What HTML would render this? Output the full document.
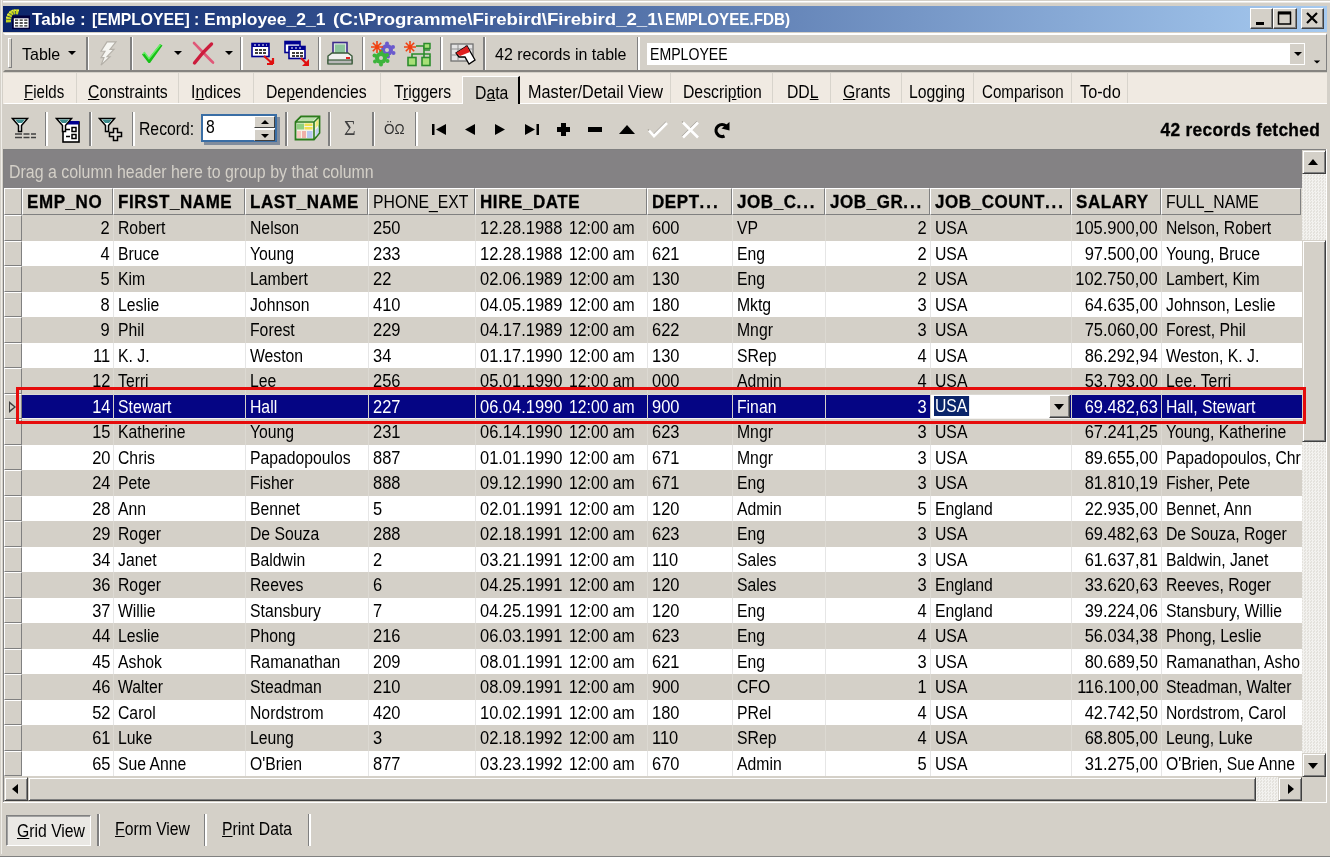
<!DOCTYPE html>
<html><head><meta charset="utf-8"><title>Table : [EMPLOYEE]</title>
<style>
*{box-sizing:border-box;margin:0;padding:0}
html,body{width:1330px;height:857px;overflow:hidden;background:#d4d0c8}
body{font-family:"Liberation Sans",sans-serif;font-size:17.5px;color:#000}
#win{position:absolute;left:0;top:0;width:1330px;height:857px;background:#d4d0c8;overflow:hidden;will-change:transform}
.abs{position:absolute}
.t{display:inline-block;white-space:nowrap;transform:scaleX(.9);transform-origin:0 50%}
/* window frame */
#frT{position:absolute;left:0;top:0;width:1330px;height:6px;background:#d4d0c8;border-top:1px solid #d4d0c8;box-shadow:inset 0 1.500px 0 #fff}
#frL{position:absolute;left:0;top:0;width:3px;height:857px;background:#d4d0c8;border-left:1px solid #d4d0c8;box-shadow:inset 1px 0 0 #f0eee9}
#frR{position:absolute;left:1327px;top:3px;width:3px;height:857px;background:#d4d0c8}
#frB{position:absolute;left:0;top:854px;width:1330px;height:3px;background:#d4d0c8;border-bottom:1px solid #808080}
/* title */
#title{position:absolute;left:3px;top:6px;width:1325px;height:26px;background:linear-gradient(to right,#0a246a 0%,#a6caf0 100%)}
#title .cap{position:absolute;left:30px;top:3px;font-weight:bold;color:#fff;font-size:17px;line-height:21px;white-space:nowrap}
#title .cap .t{transform:scaleX(1.02)}
.tb{position:absolute;top:2px;width:23px;height:21px;background:#d4d0c8;border:1px solid;border-color:#fff #404040 #404040 #fff;box-shadow:inset -1px -1px 0 #808080}
/* toolbar 1 */
#tb1{position:absolute;left:3px;border-left:2px solid #d4d0c8;top:33px;width:1324px;height:39px;background:#d4d0c8;border-top:2px solid #fff;border-bottom:2px solid #868480;border-right:1px solid #808080}
.sep{position:absolute;width:3px;background:linear-gradient(to right,#808080 0,#808080 50%,#fff 50%,#fff 100%)}
.lbl{position:absolute;white-space:nowrap;font-size:17.5px;line-height:20px}
/* tabs */
#tabs{position:absolute;left:3px;border-left:2px solid #f0eae2;top:73px;width:1324px;height:31px;background:#f0eae2;border-bottom:1px solid #fff}
.tab{position:absolute;top:0;height:30px;font-size:17.5px;line-height:20px;padding-top:9px;white-space:nowrap;border-right:1px solid #d8d4cc}
.tab u{text-decoration:underline}
/* toolbar 2 */
#tb2{position:absolute;left:3px;border-left:2px solid #d4d0c8;top:104px;width:1324px;height:45px;background:#d4d0c8}
/* group panel */
#gp{position:absolute;left:3px;top:150px;width:1299px;height:38px;background:#848284;color:#d4d0c8;font-size:17.5px;line-height:20px}
#gp .t{transform:scaleX(.91)}
#gp span{position:absolute;left:6px;top:12px}
/* grid */
#grid{position:absolute;left:0;top:0;width:1302px;height:777px;overflow:hidden}
.hrow{position:absolute;left:3px;top:188px;width:1299px;height:27px;background:#d4d0c8;border-left:1px solid #808080}
.hind{position:absolute;left:0;top:0;width:18px;height:27px;border:1px solid;border-color:#fff #808080 #808080 #fff}
.hc{position:absolute;top:0;height:27px;border:1px solid;border-color:#fff #808080 #808080 #fff;font-size:17.5px;line-height:20px;padding:3px 0 0 4px;overflow:hidden;white-space:nowrap}

.hc.b{font-weight:bold;font-size:17.5px;letter-spacing:.6px;-webkit-text-stroke:.3px #000}
.hc.b .t{transform:scaleX(.97)}
.row{position:absolute;left:3px;width:1299px;background:#fff;border-left:1px solid #808080}
.row.g{background:#d4d0c8}
.row.sel{background:#050584;color:#fff;box-shadow:inset 0 1px 0 #dcdad4,inset 0 -1px 0 #f4f2f0}
.ind{position:absolute;left:0;top:0;width:18px;height:100%;background:#d4d0c8;border:1px solid;border-color:#fff #808080 #808080 #fff}
.c{position:absolute;top:0;height:100%;line-height:20px;padding:3px 3px 0 5px;overflow:hidden;white-space:nowrap;border-right:1px solid #e6e6e6}
.row.g .c{border-right-color:#dcd9d2}
.row.sel .c{border-right-color:#d4d0c8}
.c.r{display:flex;justify-content:flex-end;padding-right:3px}
.c.r .t{transform-origin:100% 50%}
.tm{position:absolute;left:94px;top:3px}
.grip{position:absolute;left:3px;top:4px;width:4px;height:30px;border:1px solid;border-color:#fff #808080 #808080 #fff}
#tb1 .sep{top:3px;height:33px}
.arr{position:absolute;width:0;height:0;border-left:4px solid transparent;border-right:4px solid transparent;border-top:4px solid #000}
.combo{position:absolute;left:642px;top:9px;width:658px;height:22px;background:#fff}
.cbtn{position:absolute;right:1px;top:1px;width:14px;height:20px;background:#d4d0c8}
.tab.act{background:#d4d0c8;top:3px;height:28px;padding-top:6px;border-left:1px solid #fff;border-top:1px solid #fff;border-right:2px solid #000}
#tb2 .sep{top:8px;height:34px}
.spin{position:absolute;left:196px;top:10px;width:76px;height:28px;background:#fff;border:2px solid #7f9db9;border-color:#3a6ea5 #3a6ea5 #3a6ea5 #3a6ea5;box-shadow:3px 3px 0 #808c9c}
.spin .lbl{line-height:22px}
.sb{position:absolute;left:51px;width:21px;height:12px;background:#d4d0c8;border:1px solid;border-color:#fff #404040 #404040 #fff}
.arr.up{border-top:0;border-bottom:4px solid #000}

#tb1 .t{transform:scaleX(.94)}
.dith{background-color:#d4d0c8;background-image:linear-gradient(45deg,#fff 25%,transparent 25%,transparent 75%,#fff 75%),linear-gradient(45deg,#fff 25%,transparent 25%,transparent 75%,#fff 75%);background-size:2px 2px;background-position:0 0,1px 1px}
#vs{position:absolute;left:1302px;top:150px;width:24px;height:627px}
#hs{position:absolute;left:4px;top:777px;width:1298px;height:24px}
.sbtn{position:absolute;background:#d4d0c8;border:1px solid;border-color:#d4d0c8 #404040 #404040 #d4d0c8;box-shadow:inset 1px 1px 0 #fff,inset -1px -1px 0 #808080}
.arr.lf{border:4px solid transparent;border-left:0;border-right:4px solid #000}
.arr.rt{border:4px solid transparent;border-right:0;border-left:4px solid #000}
#redbox{position:absolute;left:16px;top:387px;width:1290px;height:37px;border:3px solid #e60c0c}
#bot{position:absolute;left:3px;border-left:2px solid #d4d0c8;top:803px;width:1324px;height:51px;background:#d4d0c8}
#bot .sep{top:11px;height:32px}
.gv{position:absolute;left:1px;top:12px;width:85px;height:31px;background:#eae8e4;border:1px solid;border-color:#808080 #fff #fff #808080;box-shadow:inset 1px 1px 0 #a0a0a0}

.sarr{position:absolute;width:0;height:0;border-left:5.5px solid transparent;border-right:5.5px solid transparent;border-top:6px solid #000}
.sarr.up{border-top:0;border-bottom:6px solid #000}
.sarr.lf{border:5.5px solid transparent;border-left:0;border-right:6px solid #000}
.sarr.rt{border:5.5px solid transparent;border-right:0;border-left:6px solid #000}
.ed{position:absolute;left:1px;top:1px;right:1px;bottom:1px;background:#fff;color:#fff}
.hl{position:absolute;left:3px;top:1px;height:20px;padding:0 2px 0 1px;background:#0a246a;line-height:20px}
.hl.t{transform-origin:0 50%}
.dd{position:absolute;right:0;top:0;width:21px;height:100%;background:#d4d0c8;border:1px solid;border-color:#fff #404040 #404040 #fff;box-shadow:inset -1px -1px 0 #808080}
.cur{position:absolute;left:4px;top:6px;width:0;height:0;border-top:6px solid transparent;border-bottom:6px solid transparent;border-left:7px solid #404040}
.cur:after{content:"";position:absolute;left:-6px;top:-3px;border-top:3px solid transparent;border-bottom:3px solid transparent;border-left:4px solid #d4d0c8}

#gwr{position:absolute;left:1326px;top:149px;width:1px;height:654px;background:#fff}
#gwb{position:absolute;left:3px;top:802px;width:1324px;height:1px;background:#fff}
#gcorner{position:absolute;left:1302px;top:777px;width:24px;height:25px;background:#d4d0c8}

#tb1>*{margin-top:-1px}

#vs,#hs{background-color:#ebe9e5;background-image:conic-gradient(#f3f2ef 25%,#e4e2dd 0 50%,#f3f2ef 0 75%,#e4e2dd 0);background-size:3px 3px}

.row .c.last{border-right:0}
.el{letter-spacing:2px}
.t.n{transform:scaleX(.94)}
#gwl{position:absolute;left:3px;top:149px;width:1px;height:653px;background:#808080}
#gwt{position:absolute;left:3px;top:149px;width:1323px;height:1px;background:#808080}

</style></head>
<body>
<div id="win">
<div id="title">
<svg class="abs" style="left:1px;top:2px" width="28" height="24" viewBox="0 0 28 24"><path d="M14.500 4 C8 2.500 4 6 4.500 15" stroke="#c4d41c" stroke-width="5" fill="none" stroke-dasharray="2.400 .6"/><path d="M15 2.500 C9 1 3 4 2.500 12" stroke="#e8ec50" stroke-width="1.500" fill="none" stroke-dasharray="1.500 1.500"/><rect x="8" y="7.500" width="18" height="13.700" fill="#00003c"/><rect x="9.800" y="10.300" width="14.800" height="9.400" fill="#fff"/><path d="M11 12.200h3.200M15.600 12.200h3.200M20.200 12.200h3.200M11 15h3.200M15.600 15h3.200M20.200 15h3.200M11 17.800h3.200M15.600 17.800h3.200M20.200 17.800h3.200" stroke="#202020" stroke-width="1.300"/></svg>
<span class="cap" style="left:29.1px"><span class="t" style="transform:scaleX(1.000)">Table :</span></span><span class="cap" style="left:89.0px"><span class="t" style="transform:scaleX(0.924)">[EMPLOYEE] :</span></span><span class="cap" style="left:201.0px"><span class="t" style="transform:scaleX(1.028)">Employee_2_1</span></span><span class="cap" style="left:330.4px"><span class="t" style="transform:scaleX(1.094)">(C:\Programme\Firebird\Firebird_2_1\</span></span><span class="cap" style="left:661.8px"><span class="t" style="transform:scaleX(0.894)">EMPLOYEE.FDB)</span></span>
<div class="tb" style="left:1247px"><svg width="21" height="19" viewBox="0 0 21 19"><rect x="5" y="13" width="8" height="3" fill="#000"/></svg></div>
<div class="tb" style="left:1270px;width:24px"><svg width="22" height="19" viewBox="0 0 22 19"><rect x="4.5" y="3.5" width="12" height="11.5" fill="none" stroke="#000" stroke-width="1.5"/><rect x="4" y="2.5" width="13" height="3" fill="#000"/></svg></div>
<div class="tb" style="left:1298px"><svg width="21" height="19" viewBox="0 0 21 19"><path d="M5 4l10 10M15 4l-10 10" stroke="#000" stroke-width="2.2"/></svg></div>
</div>
<div id="tb1">
<div class="grip"></div>
<span class="lbl" style="left:17px;top:11px;font-size:17px"><span class="t">Table</span></span>
<i class="arr" style="left:63px;top:17px"></i>
<div class="sep" style="left:81px"></div>
<svg class="abs" style="left:93px;top:7px" width="20" height="25" viewBox="0 0 20 27" preserveAspectRatio="none"><path d="M9 1 L18 1 L12 9 L16 9 L9 17 L12 17 L3 26 L6 18 L3 18 L7 11 L3 11 Z" fill="#f6f6f2" stroke="#b4b0a8" stroke-width="1.200"/></svg>
<div class="sep" style="left:125px"></div>
<svg class="abs" style="left:134px;top:7px" width="26" height="24" viewBox="0 0 26 24"><path d="M3 13.500 L5.500 11 L10 17 L21 3 L23.500 4.500 L11 22 L9.500 22 Z" fill="#18c018"/><path d="M4 13 L5.500 11.500 L10 17.500 L21.500 3.500" stroke="#68f068" stroke-width="1.400" fill="none"/></svg>
<i class="arr" style="left:169px;top:17px"></i>
<svg class="abs" style="left:186px;top:7px" width="26" height="26" viewBox="0 0 26 26"><path d="M3 2 C9 8 16 16 22 21.500" stroke="#e05878" stroke-width="2.600" stroke-linecap="round" fill="none"/><path d="M20.500 3 C14 9 8 16 3.500 22" stroke="#cc1c3c" stroke-width="3.400" stroke-linecap="round" fill="none"/></svg>
<i class="arr" style="left:220px;top:17px"></i>
<div class="sep" style="left:235px"></div>
<svg class="abs" style="left:246px;top:8px" width="24" height="24" viewBox="0 0 24 24"><rect x="1" y="1.5" width="17" height="13" fill="#fff" stroke="#000090" stroke-width="1.6"/><rect x="1" y="1.5" width="17" height="3.5" fill="#000090"/><path d="M3 3h2M7 3h2M11 3h2M15 3h1" stroke="#fff" stroke-width="1.2"/><path d="M4 8h11M4 11h11" stroke="#000" stroke-width="1.6" stroke-dasharray="3 1"/><path d="M13 14 L22 22 M22 22 L22 16 M22 22 L16 22" stroke="#e01010" stroke-width="2.2" fill="none"/><path d="M22 23 L22 17 L16 23Z" fill="#e01010"/></svg>
<svg class="abs" style="left:279px;top:6px" width="26" height="27" viewBox="0 0 26 27"><rect x="1" y="1.5" width="15" height="11" fill="#fff" stroke="#000090" stroke-width="1.6"/><rect x="1" y="1.5" width="15" height="3" fill="#000090"/><rect x="5" y="6.5" width="16" height="12" fill="#fff" stroke="#000090" stroke-width="1.6"/><rect x="5" y="6.5" width="16" height="3.5" fill="#000090"/><path d="M7 8h2M11 8h2M15 8h2" stroke="#fff" stroke-width="1.2"/><path d="M8 13h11M8 16h11" stroke="#000" stroke-width="1.6" stroke-dasharray="3 1"/><path d="M25 26 L25 19 L18 26Z" fill="#e01010"/><path d="M17 18 L23 24" stroke="#e01010" stroke-width="2.2"/></svg>
<div class="sep" style="left:313px"></div>
<svg class="abs" style="left:322px;top:7px" width="26" height="26" viewBox="0 0 26 26"><rect x="6" y="1.5" width="14" height="12" fill="#dfe8df" stroke="#3c2c8c" stroke-width="1.6"/><rect x="8" y="3.5" width="10" height="9" fill="#8cc49c"/><path d="M1 15 L5 12 L21 12 L25 15 L25 22 L1 22 Z" fill="#f0f0f0" stroke="#3a5a3a" stroke-width="1.4"/><rect x="1" y="19" width="24" height="4" fill="#b8b8b8" stroke="#3a5a3a" stroke-width="1.2"/><rect x="19" y="16" width="4" height="2" fill="#e02020"/></svg>
<div class="sep" style="left:357px"></div>
<svg class="abs" style="left:366px;top:7px" width="26" height="26" viewBox="0 0 26 26"><g fill="#6a5acd"><circle cx="16" cy="9" r="6"/><circle cx="16" cy="2.5" r="2"/><circle cx="22" cy="6" r="2"/><circle cx="22.5" cy="12" r="2"/><circle cx="17" cy="15.5" r="2"/></g><circle cx="16" cy="9" r="2" fill="#d4d0c8"/><g fill="#3cb43c"><circle cx="10" cy="17" r="6"/><circle cx="10" cy="10.5" r="2"/><circle cx="16" cy="14" r="2"/><circle cx="16.5" cy="20" r="2"/><circle cx="10" cy="23.5" r="2"/><circle cx="4" cy="20.5" r="2"/><circle cx="3.5" cy="14.5" r="2"/></g><circle cx="10" cy="17" r="2" fill="#d4d0c8"/><path d="M6 0v12M0 6h12M1.8 1.8l8.4 8.4M10.2 1.8l-8.4 8.4" stroke="#f04010" stroke-width="1.6"/></svg>
<svg class="abs" style="left:399px;top:7px" width="28" height="26" viewBox="0 0 28 26"><path d="M12 5h8v7M20 9h6M20 12v4M8 16v-3h18v3" stroke="#2c8c2c" stroke-width="1.6" fill="none"/><rect x="20" y="2.5" width="6" height="5" fill="#a8e078" stroke="#2c8c2c" stroke-width="1.5"/><rect x="4" y="16.5" width="8" height="8" fill="#a8e078" stroke="#2c8c2c" stroke-width="1.6"/><rect x="18" y="16.5" width="8" height="8" fill="#a8e078" stroke="#2c8c2c" stroke-width="1.6"/><path d="M6 0v12M0 6h12M1.8 1.8l8.4 8.4M10.2 1.8l-8.4 8.4" stroke="#f04010" stroke-width="1.6"/></svg>
<div class="sep" style="left:435px"></div>
<svg class="abs" style="left:445px;top:9px" width="26" height="24" viewBox="0 0 26 24"><rect x="1" y="1" width="22" height="17" fill="#e4e4e4" stroke="#707070" stroke-width="1.3"/><path d="M1 6h22M1 12h22M8 1v17M16 1v17" stroke="#909090" stroke-width="1"/><path d="M6 10 L17 3 L25 17 L19 21 L15 14 L9 14 Z" fill="#fff" stroke="#000" stroke-width="1.3"/><path d="M6 10 L17 3 L20 9 L10 13 Z" fill="#e02020"/></svg>
<div class="sep" style="left:478px"></div>
<span class="lbl" style="left:490px;top:11px;font-size:17px"><span class="t">42 records in table</span></span>
<div class="sep" style="left:632px"></div>
<div class="combo"><span class="lbl" style="left:3px;top:1px;font-size:17px;line-height:21px"><span class="t" style="transform:scaleX(.83)">EMPLOYEE</span></span><div class="cbtn"><i class="arr" style="left:4px;top:8px"></i></div></div>
<i class="arr" style="left:1308px;top:26px;transform:scale(.8)"></i>
</div>
<div id="tabs">
<div class="tab" style="left:0;width:72px;padding-left:19px"><span class="t" style="transform:scaleX(.86)"><u>F</u>ields</span></div>
<div class="tab" style="left:72px;width:102px;padding-left:11px"><span class="t"><u>C</u>onstraints</span></div>
<div class="tab" style="left:174px;width:75px;padding-left:12px"><span class="t">I<u>n</u>dices</span></div>
<div class="tab" style="left:249px;width:127px;padding-left:12px"><span class="t">De<u>p</u>endencies</span></div>
<div class="tab" style="left:376px;width:81px;padding-left:13px;border-right:0"><span class="t">T<u>r</u>iggers</span></div>
<div class="tab act" style="left:457px;width:58px;padding-left:12px"><span class="t">D<u>a</u>ta</span></div>
<div class="tab" style="left:516px;width:150px;padding-left:7px"><span class="t" style="transform:scaleX(.927)">Master/Detail View</span></div>
<div class="tab" style="left:666px;width:102px;padding-left:12px"><span class="t">Descri<u>p</u>tion</span></div>
<div class="tab" style="left:768px;width:58px;padding-left:14px"><span class="t">DD<u>L</u></span></div>
<div class="tab" style="left:826px;width:71px;padding-left:12px"><span class="t"><u>G</u>rants</span></div>
<div class="tab" style="left:897px;width:72px;padding-left:7px"><span class="t">Lo<u>g</u>ging</span></div>
<div class="tab" style="left:969px;width:98px;padding-left:8px"><span class="t" style="transform:scaleX(.865)">Comparison</span></div>
<div class="tab" style="left:1067px;width:56px;padding-left:8px"><span class="t" style="transform:scaleX(.93)">To-do</span></div>
</div>
<div id="tb2">
<svg class="abs" style="left:6px;top:12px" width="26" height="26" viewBox="0 0 26 26"><path d="M1.500 2.500h15l-6 7v6h-3v-6z" fill="#fff" stroke="#000" stroke-width="1.500"/><path d="M4 3.500h10l-3 3.500h-4z" fill="#3c8c8c"/><path d="M4 18h7M12.500 18h6M20 18h5M4 21.500h7M12.500 21.500h6M20 21.500h5" stroke="#404040" stroke-width="1.500"/></svg>
<svg class="abs" style="left:50px;top:12px" width="28" height="28" viewBox="0 0 28 28"><rect x="8" y="6" width="16" height="20" fill="#fff" stroke="#000" stroke-width="1.600"/><rect x="8" y="5" width="16" height="3.500" fill="#000090"/><rect x="17" y="11.500" width="4" height="4" fill="none" stroke="#000" stroke-width="1.500"/><rect x="17" y="18.500" width="4" height="4" fill="none" stroke="#000" stroke-width="1.500"/><path d="M11 13.500h4M11 20.500h4" stroke="#000" stroke-width="1.500"/><path d="M1.500 2.500h15l-6 7v6h-3v-6z" fill="#fff" stroke="#000" stroke-width="1.500"/><path d="M4 3.500h10l-3 3.500h-4z" fill="#3c8c8c"/></svg>
<svg class="abs" style="left:93px;top:12px" width="28" height="28" viewBox="0 0 28 28"><path d="M1.500 2.500h15l-6 7v6h-3v-6z" fill="#fff" stroke="#000" stroke-width="1.500"/><path d="M4 3.500h10l-3 3.500h-4z" fill="#3c8c8c"/><path d="M15.500 12.500h4v4h4v4h-4v4h-4v-4h-4v-4h4z" fill="#e4e2dc" stroke="#000" stroke-width="1.500"/></svg>
<div class="sep" style="left:40px"></div><div class="sep" style="left:84px"></div><div class="sep" style="left:127px"></div>
<span class="lbl" style="left:134px;top:15px"><span class="t">Record:</span></span>
<div class="spin"><span class="lbl" style="left:3px;top:0px"><span class="t">8</span></span>
<div class="sb" style="top:0"><i class="arr up" style="left:6px;top:3px"></i></div><div class="sb" style="top:13px"><i class="arr" style="left:6px;top:4px"></i></div></div>
<div class="sep" style="left:280px"></div>
<svg class="abs" style="left:289px;top:11px" width="27" height="26" viewBox="0 0 27 26"><path d="M1.500 7 L7 1.500 L25.500 1.500 L25.500 18 L20 24.500 L1.500 24.500 Z" fill="#f4f4e8" stroke="#2c7c1c" stroke-width="1.800"/><path d="M1.500 7 H20 V24.500 M20 7 L25.500 1.500" fill="none" stroke="#2c7c1c" stroke-width="1.600"/><rect x="3" y="8.500" width="7" height="6" fill="#90d080"/><rect x="10.500" y="8.500" width="8" height="2.500" fill="#f0e050"/><rect x="10.500" y="12" width="8" height="2.500" fill="#f0e050"/><rect x="3" y="16" width="4" height="7" fill="#f8c8c0"/><rect x="8" y="16" width="4" height="7" fill="#f0b0a8"/><rect x="13" y="16" width="5.500" height="7" fill="#b8c8f0"/><path d="M21.500 7 L24.500 4 V10 L21.500 13Z" fill="#f0e878"/><path d="M21.500 15 L24.500 12 V18 L21.500 22Z" fill="#c0d0f0"/><path d="M4 6 L8 3 H22 L19 6Z" fill="#b8e0a8"/></svg>
<div class="sep" style="left:323px"></div>
<span class="lbl" style="left:339px;top:14px;font-family:'Liberation Serif',serif;font-size:20px;color:#404040">&#931;</span>
<div class="sep" style="left:367px"></div>
<span class="lbl" style="left:379px;top:15px;font-size:15px;color:#303030"><span class="t">&#214;&#937;</span></span>
<div class="sep" style="left:410px"></div>
<svg class="abs" style="left:420px;top:14px" width="310" height="22" viewBox="0 0 310 22">
<g fill="#000">
<rect x="7" y="6" width="2.5" height="11"/><path d="M21 6v11l-10-5.5z"/>
<path d="M50 6v11l-10-5.5z"/>
<path d="M70 6v11l10-5.5z"/>
<path d="M100 6v11l10-5.5z"/><rect x="111.500" y="6" width="2.500" height="11"/>
<path d="M136 5h5v4h4v5h-4v4h-5v-4h-4v-5h4z"/>
<rect x="163" y="9" width="14" height="5"/>
<path d="M194 16h16l-8-9z"/>
<path d="M299.500 18 A6 6 0 1 1 301 8" stroke="#000" stroke-width="3.200" fill="none"/><path d="M304.500 4 V12.500 L296.500 10.500 Z"/>
</g>
<path d="M224 12.500 l5 5.500 13-13" stroke="#a8a49c" stroke-width="1.200" fill="none" transform="translate(-1,-1.200)"/><path d="M224 12.500 l5 5.500 13-13" stroke="#fff" stroke-width="2.600" fill="none"/>
<path d="M258 4.500l15 15M273 4.500l-15 15" stroke="#a8a49c" stroke-width="1.200" fill="none" transform="translate(-1,-1.200)"/><path d="M258 4.500l15 15M273 4.500l-15 15" stroke="#fff" stroke-width="2.600" fill="none"/>
</svg>
<span class="lbl" style="right:7px;top:16px;font-weight:bold;font-size:17.5px;letter-spacing:.3px;-webkit-text-stroke:.3px #000"><span class="t" style="transform-origin:100% 50%;transform:scaleX(.99)">42 records fetched</span></span>
</div>
<div id="gp"><span class="t">Drag a column header here to group by that column</span></div>
<div id="grid">
<div class="hrow"><div class="hind"></div><div class="hc b" style="left:18px;width:91px"><span class="t">EMP_NO</span></div><div class="hc b" style="left:109px;width:132px"><span class="t">FIRST_NAME</span></div><div class="hc b" style="left:241px;width:123px"><span class="t">LAST_NAME</span></div><div class="hc" style="left:364px;width:107px"><span class="t">PHONE_EXT</span></div><div class="hc b" style="left:471px;width:172px"><span class="t">HIRE_DATE</span></div><div class="hc b" style="left:643px;width:85px"><span class="t">DEPT<span class="el">...</span></span></div><div class="hc b" style="left:728px;width:93px"><span class="t">JOB_C<span class="el">...</span></span></div><div class="hc b" style="left:821px;width:105px"><span class="t">JOB_GR<span class="el">...</span></span></div><div class="hc b" style="left:926px;width:141px"><span class="t">JOB_COUNT<span class="el">...</span></span></div><div class="hc b" style="left:1067px;width:90px"><span class="t">SALARY</span></div><div class="hc" style="left:1157px;width:140px"><span class="t">FULL_NAME</span></div></div>
<div class="row g" style="top:215px;height:26px"><div class="ind"></div><div class="c r" style="left:18px;width:92px"><span class="t n">2</span></div><div class="c l" style="left:109px;width:133px"><span class="t">Robert</span></div><div class="c l" style="left:241px;width:124px"><span class="t">Nelson</span></div><div class="c l" style="left:364px;width:108px"><span class="t n">250</span></div><div class="c l" style="left:471px;width:173px"><span class="t n">12.28.1988</span><span class="t tm">12:00 am</span></div><div class="c l" style="left:643px;width:86px"><span class="t n">600</span></div><div class="c l" style="left:728px;width:94px"><span class="t">VP</span></div><div class="c r" style="left:821px;width:106px"><span class="t n">2</span></div><div class="c l" style="left:926px;width:142px"><span class="t">USA</span></div><div class="c r" style="left:1067px;width:91px"><span class="t n">105.900,00</span></div><div class="c l last" style="left:1157px;width:141px"><span class="t">Nelson, Robert</span></div></div>
<div class="row" style="top:241px;height:25px"><div class="ind"></div><div class="c r" style="left:18px;width:92px"><span class="t n">4</span></div><div class="c l" style="left:109px;width:133px"><span class="t">Bruce</span></div><div class="c l" style="left:241px;width:124px"><span class="t">Young</span></div><div class="c l" style="left:364px;width:108px"><span class="t n">233</span></div><div class="c l" style="left:471px;width:173px"><span class="t n">12.28.1988</span><span class="t tm">12:00 am</span></div><div class="c l" style="left:643px;width:86px"><span class="t n">621</span></div><div class="c l" style="left:728px;width:94px"><span class="t">Eng</span></div><div class="c r" style="left:821px;width:106px"><span class="t n">2</span></div><div class="c l" style="left:926px;width:142px"><span class="t">USA</span></div><div class="c r" style="left:1067px;width:91px"><span class="t n">97.500,00</span></div><div class="c l last" style="left:1157px;width:141px"><span class="t">Young, Bruce</span></div></div>
<div class="row g" style="top:266px;height:26px"><div class="ind"></div><div class="c r" style="left:18px;width:92px"><span class="t n">5</span></div><div class="c l" style="left:109px;width:133px"><span class="t">Kim</span></div><div class="c l" style="left:241px;width:124px"><span class="t">Lambert</span></div><div class="c l" style="left:364px;width:108px"><span class="t n">22</span></div><div class="c l" style="left:471px;width:173px"><span class="t n">02.06.1989</span><span class="t tm">12:00 am</span></div><div class="c l" style="left:643px;width:86px"><span class="t n">130</span></div><div class="c l" style="left:728px;width:94px"><span class="t">Eng</span></div><div class="c r" style="left:821px;width:106px"><span class="t n">2</span></div><div class="c l" style="left:926px;width:142px"><span class="t">USA</span></div><div class="c r" style="left:1067px;width:91px"><span class="t n">102.750,00</span></div><div class="c l last" style="left:1157px;width:141px"><span class="t">Lambert, Kim</span></div></div>
<div class="row" style="top:292px;height:25px"><div class="ind"></div><div class="c r" style="left:18px;width:92px"><span class="t n">8</span></div><div class="c l" style="left:109px;width:133px"><span class="t">Leslie</span></div><div class="c l" style="left:241px;width:124px"><span class="t">Johnson</span></div><div class="c l" style="left:364px;width:108px"><span class="t n">410</span></div><div class="c l" style="left:471px;width:173px"><span class="t n">04.05.1989</span><span class="t tm">12:00 am</span></div><div class="c l" style="left:643px;width:86px"><span class="t n">180</span></div><div class="c l" style="left:728px;width:94px"><span class="t">Mktg</span></div><div class="c r" style="left:821px;width:106px"><span class="t n">3</span></div><div class="c l" style="left:926px;width:142px"><span class="t">USA</span></div><div class="c r" style="left:1067px;width:91px"><span class="t n">64.635,00</span></div><div class="c l last" style="left:1157px;width:141px"><span class="t">Johnson, Leslie</span></div></div>
<div class="row g" style="top:317px;height:26px"><div class="ind"></div><div class="c r" style="left:18px;width:92px"><span class="t n">9</span></div><div class="c l" style="left:109px;width:133px"><span class="t">Phil</span></div><div class="c l" style="left:241px;width:124px"><span class="t">Forest</span></div><div class="c l" style="left:364px;width:108px"><span class="t n">229</span></div><div class="c l" style="left:471px;width:173px"><span class="t n">04.17.1989</span><span class="t tm">12:00 am</span></div><div class="c l" style="left:643px;width:86px"><span class="t n">622</span></div><div class="c l" style="left:728px;width:94px"><span class="t">Mngr</span></div><div class="c r" style="left:821px;width:106px"><span class="t n">3</span></div><div class="c l" style="left:926px;width:142px"><span class="t">USA</span></div><div class="c r" style="left:1067px;width:91px"><span class="t n">75.060,00</span></div><div class="c l last" style="left:1157px;width:141px"><span class="t">Forest, Phil</span></div></div>
<div class="row" style="top:343px;height:25px"><div class="ind"></div><div class="c r" style="left:18px;width:92px"><span class="t n">11</span></div><div class="c l" style="left:109px;width:133px"><span class="t">K. J.</span></div><div class="c l" style="left:241px;width:124px"><span class="t">Weston</span></div><div class="c l" style="left:364px;width:108px"><span class="t n">34</span></div><div class="c l" style="left:471px;width:173px"><span class="t n">01.17.1990</span><span class="t tm">12:00 am</span></div><div class="c l" style="left:643px;width:86px"><span class="t n">130</span></div><div class="c l" style="left:728px;width:94px"><span class="t">SRep</span></div><div class="c r" style="left:821px;width:106px"><span class="t n">4</span></div><div class="c l" style="left:926px;width:142px"><span class="t">USA</span></div><div class="c r" style="left:1067px;width:91px"><span class="t n">86.292,94</span></div><div class="c l last" style="left:1157px;width:141px"><span class="t">Weston, K. J.</span></div></div>
<div class="row g" style="top:368px;height:26px"><div class="ind"></div><div class="c r" style="left:18px;width:92px"><span class="t n">12</span></div><div class="c l" style="left:109px;width:133px"><span class="t">Terri</span></div><div class="c l" style="left:241px;width:124px"><span class="t">Lee</span></div><div class="c l" style="left:364px;width:108px"><span class="t n">256</span></div><div class="c l" style="left:471px;width:173px"><span class="t n">05.01.1990</span><span class="t tm">12:00 am</span></div><div class="c l" style="left:643px;width:86px"><span class="t n">000</span></div><div class="c l" style="left:728px;width:94px"><span class="t">Admin</span></div><div class="c r" style="left:821px;width:106px"><span class="t n">4</span></div><div class="c l" style="left:926px;width:142px"><span class="t">USA</span></div><div class="c r" style="left:1067px;width:91px"><span class="t n">53.793,00</span></div><div class="c l last" style="left:1157px;width:141px"><span class="t">Lee, Terri</span></div></div>
<div class="row sel" style="top:394px;height:25px"><div class="ind"><i class="cur"></i></div><div class="c r" style="left:18px;width:92px"><span class="t n">14</span></div><div class="c l" style="left:109px;width:133px"><span class="t">Stewart</span></div><div class="c l" style="left:241px;width:124px"><span class="t">Hall</span></div><div class="c l" style="left:364px;width:108px"><span class="t n">227</span></div><div class="c l" style="left:471px;width:173px"><span class="t n">06.04.1990</span><span class="t tm">12:00 am</span></div><div class="c l" style="left:643px;width:86px"><span class="t n">900</span></div><div class="c l" style="left:728px;width:94px"><span class="t">Finan</span></div><div class="c r" style="left:821px;width:106px"><span class="t n">3</span></div><div class="c l" style="left:926px;width:142px"><span class="ed"><span class="t hl">USA</span><i class="dd"><i class="sarr" style="left:4px;top:8px"></i></i></span></div><div class="c r" style="left:1067px;width:91px"><span class="t n">69.482,63</span></div><div class="c l last" style="left:1157px;width:141px"><span class="t">Hall, Stewart</span></div></div>
<div class="row g" style="top:419px;height:26px"><div class="ind"></div><div class="c r" style="left:18px;width:92px"><span class="t n">15</span></div><div class="c l" style="left:109px;width:133px"><span class="t">Katherine</span></div><div class="c l" style="left:241px;width:124px"><span class="t">Young</span></div><div class="c l" style="left:364px;width:108px"><span class="t n">231</span></div><div class="c l" style="left:471px;width:173px"><span class="t n">06.14.1990</span><span class="t tm">12:00 am</span></div><div class="c l" style="left:643px;width:86px"><span class="t n">623</span></div><div class="c l" style="left:728px;width:94px"><span class="t">Mngr</span></div><div class="c r" style="left:821px;width:106px"><span class="t n">3</span></div><div class="c l" style="left:926px;width:142px"><span class="t">USA</span></div><div class="c r" style="left:1067px;width:91px"><span class="t n">67.241,25</span></div><div class="c l last" style="left:1157px;width:141px"><span class="t">Young, Katherine</span></div></div>
<div class="row" style="top:445px;height:25px"><div class="ind"></div><div class="c r" style="left:18px;width:92px"><span class="t n">20</span></div><div class="c l" style="left:109px;width:133px"><span class="t">Chris</span></div><div class="c l" style="left:241px;width:124px"><span class="t">Papadopoulos</span></div><div class="c l" style="left:364px;width:108px"><span class="t n">887</span></div><div class="c l" style="left:471px;width:173px"><span class="t n">01.01.1990</span><span class="t tm">12:00 am</span></div><div class="c l" style="left:643px;width:86px"><span class="t n">671</span></div><div class="c l" style="left:728px;width:94px"><span class="t">Mngr</span></div><div class="c r" style="left:821px;width:106px"><span class="t n">3</span></div><div class="c l" style="left:926px;width:142px"><span class="t">USA</span></div><div class="c r" style="left:1067px;width:91px"><span class="t n">89.655,00</span></div><div class="c l last" style="left:1157px;width:141px"><span class="t">Papadopoulos, Chr</span></div></div>
<div class="row g" style="top:470px;height:26px"><div class="ind"></div><div class="c r" style="left:18px;width:92px"><span class="t n">24</span></div><div class="c l" style="left:109px;width:133px"><span class="t">Pete</span></div><div class="c l" style="left:241px;width:124px"><span class="t">Fisher</span></div><div class="c l" style="left:364px;width:108px"><span class="t n">888</span></div><div class="c l" style="left:471px;width:173px"><span class="t n">09.12.1990</span><span class="t tm">12:00 am</span></div><div class="c l" style="left:643px;width:86px"><span class="t n">671</span></div><div class="c l" style="left:728px;width:94px"><span class="t">Eng</span></div><div class="c r" style="left:821px;width:106px"><span class="t n">3</span></div><div class="c l" style="left:926px;width:142px"><span class="t">USA</span></div><div class="c r" style="left:1067px;width:91px"><span class="t n">81.810,19</span></div><div class="c l last" style="left:1157px;width:141px"><span class="t">Fisher, Pete</span></div></div>
<div class="row" style="top:496px;height:25px"><div class="ind"></div><div class="c r" style="left:18px;width:92px"><span class="t n">28</span></div><div class="c l" style="left:109px;width:133px"><span class="t">Ann</span></div><div class="c l" style="left:241px;width:124px"><span class="t">Bennet</span></div><div class="c l" style="left:364px;width:108px"><span class="t n">5</span></div><div class="c l" style="left:471px;width:173px"><span class="t n">02.01.1991</span><span class="t tm">12:00 am</span></div><div class="c l" style="left:643px;width:86px"><span class="t n">120</span></div><div class="c l" style="left:728px;width:94px"><span class="t">Admin</span></div><div class="c r" style="left:821px;width:106px"><span class="t n">5</span></div><div class="c l" style="left:926px;width:142px"><span class="t">England</span></div><div class="c r" style="left:1067px;width:91px"><span class="t n">22.935,00</span></div><div class="c l last" style="left:1157px;width:141px"><span class="t">Bennet, Ann</span></div></div>
<div class="row g" style="top:521px;height:26px"><div class="ind"></div><div class="c r" style="left:18px;width:92px"><span class="t n">29</span></div><div class="c l" style="left:109px;width:133px"><span class="t">Roger</span></div><div class="c l" style="left:241px;width:124px"><span class="t">De Souza</span></div><div class="c l" style="left:364px;width:108px"><span class="t n">288</span></div><div class="c l" style="left:471px;width:173px"><span class="t n">02.18.1991</span><span class="t tm">12:00 am</span></div><div class="c l" style="left:643px;width:86px"><span class="t n">623</span></div><div class="c l" style="left:728px;width:94px"><span class="t">Eng</span></div><div class="c r" style="left:821px;width:106px"><span class="t n">3</span></div><div class="c l" style="left:926px;width:142px"><span class="t">USA</span></div><div class="c r" style="left:1067px;width:91px"><span class="t n">69.482,63</span></div><div class="c l last" style="left:1157px;width:141px"><span class="t">De Souza, Roger</span></div></div>
<div class="row" style="top:547px;height:25px"><div class="ind"></div><div class="c r" style="left:18px;width:92px"><span class="t n">34</span></div><div class="c l" style="left:109px;width:133px"><span class="t">Janet</span></div><div class="c l" style="left:241px;width:124px"><span class="t">Baldwin</span></div><div class="c l" style="left:364px;width:108px"><span class="t n">2</span></div><div class="c l" style="left:471px;width:173px"><span class="t n">03.21.1991</span><span class="t tm">12:00 am</span></div><div class="c l" style="left:643px;width:86px"><span class="t n">110</span></div><div class="c l" style="left:728px;width:94px"><span class="t">Sales</span></div><div class="c r" style="left:821px;width:106px"><span class="t n">3</span></div><div class="c l" style="left:926px;width:142px"><span class="t">USA</span></div><div class="c r" style="left:1067px;width:91px"><span class="t n">61.637,81</span></div><div class="c l last" style="left:1157px;width:141px"><span class="t">Baldwin, Janet</span></div></div>
<div class="row g" style="top:572px;height:26px"><div class="ind"></div><div class="c r" style="left:18px;width:92px"><span class="t n">36</span></div><div class="c l" style="left:109px;width:133px"><span class="t">Roger</span></div><div class="c l" style="left:241px;width:124px"><span class="t">Reeves</span></div><div class="c l" style="left:364px;width:108px"><span class="t n">6</span></div><div class="c l" style="left:471px;width:173px"><span class="t n">04.25.1991</span><span class="t tm">12:00 am</span></div><div class="c l" style="left:643px;width:86px"><span class="t n">120</span></div><div class="c l" style="left:728px;width:94px"><span class="t">Sales</span></div><div class="c r" style="left:821px;width:106px"><span class="t n">3</span></div><div class="c l" style="left:926px;width:142px"><span class="t">England</span></div><div class="c r" style="left:1067px;width:91px"><span class="t n">33.620,63</span></div><div class="c l last" style="left:1157px;width:141px"><span class="t">Reeves, Roger</span></div></div>
<div class="row" style="top:598px;height:25px"><div class="ind"></div><div class="c r" style="left:18px;width:92px"><span class="t n">37</span></div><div class="c l" style="left:109px;width:133px"><span class="t">Willie</span></div><div class="c l" style="left:241px;width:124px"><span class="t">Stansbury</span></div><div class="c l" style="left:364px;width:108px"><span class="t n">7</span></div><div class="c l" style="left:471px;width:173px"><span class="t n">04.25.1991</span><span class="t tm">12:00 am</span></div><div class="c l" style="left:643px;width:86px"><span class="t n">120</span></div><div class="c l" style="left:728px;width:94px"><span class="t">Eng</span></div><div class="c r" style="left:821px;width:106px"><span class="t n">4</span></div><div class="c l" style="left:926px;width:142px"><span class="t">England</span></div><div class="c r" style="left:1067px;width:91px"><span class="t n">39.224,06</span></div><div class="c l last" style="left:1157px;width:141px"><span class="t">Stansbury, Willie</span></div></div>
<div class="row g" style="top:623px;height:26px"><div class="ind"></div><div class="c r" style="left:18px;width:92px"><span class="t n">44</span></div><div class="c l" style="left:109px;width:133px"><span class="t">Leslie</span></div><div class="c l" style="left:241px;width:124px"><span class="t">Phong</span></div><div class="c l" style="left:364px;width:108px"><span class="t n">216</span></div><div class="c l" style="left:471px;width:173px"><span class="t n">06.03.1991</span><span class="t tm">12:00 am</span></div><div class="c l" style="left:643px;width:86px"><span class="t n">623</span></div><div class="c l" style="left:728px;width:94px"><span class="t">Eng</span></div><div class="c r" style="left:821px;width:106px"><span class="t n">4</span></div><div class="c l" style="left:926px;width:142px"><span class="t">USA</span></div><div class="c r" style="left:1067px;width:91px"><span class="t n">56.034,38</span></div><div class="c l last" style="left:1157px;width:141px"><span class="t">Phong, Leslie</span></div></div>
<div class="row" style="top:649px;height:25px"><div class="ind"></div><div class="c r" style="left:18px;width:92px"><span class="t n">45</span></div><div class="c l" style="left:109px;width:133px"><span class="t">Ashok</span></div><div class="c l" style="left:241px;width:124px"><span class="t">Ramanathan</span></div><div class="c l" style="left:364px;width:108px"><span class="t n">209</span></div><div class="c l" style="left:471px;width:173px"><span class="t n">08.01.1991</span><span class="t tm">12:00 am</span></div><div class="c l" style="left:643px;width:86px"><span class="t n">621</span></div><div class="c l" style="left:728px;width:94px"><span class="t">Eng</span></div><div class="c r" style="left:821px;width:106px"><span class="t n">3</span></div><div class="c l" style="left:926px;width:142px"><span class="t">USA</span></div><div class="c r" style="left:1067px;width:91px"><span class="t n">80.689,50</span></div><div class="c l last" style="left:1157px;width:141px"><span class="t">Ramanathan, Asho</span></div></div>
<div class="row g" style="top:674px;height:26px"><div class="ind"></div><div class="c r" style="left:18px;width:92px"><span class="t n">46</span></div><div class="c l" style="left:109px;width:133px"><span class="t">Walter</span></div><div class="c l" style="left:241px;width:124px"><span class="t">Steadman</span></div><div class="c l" style="left:364px;width:108px"><span class="t n">210</span></div><div class="c l" style="left:471px;width:173px"><span class="t n">08.09.1991</span><span class="t tm">12:00 am</span></div><div class="c l" style="left:643px;width:86px"><span class="t n">900</span></div><div class="c l" style="left:728px;width:94px"><span class="t">CFO</span></div><div class="c r" style="left:821px;width:106px"><span class="t n">1</span></div><div class="c l" style="left:926px;width:142px"><span class="t">USA</span></div><div class="c r" style="left:1067px;width:91px"><span class="t n">116.100,00</span></div><div class="c l last" style="left:1157px;width:141px"><span class="t">Steadman, Walter</span></div></div>
<div class="row" style="top:700px;height:25px"><div class="ind"></div><div class="c r" style="left:18px;width:92px"><span class="t n">52</span></div><div class="c l" style="left:109px;width:133px"><span class="t">Carol</span></div><div class="c l" style="left:241px;width:124px"><span class="t">Nordstrom</span></div><div class="c l" style="left:364px;width:108px"><span class="t n">420</span></div><div class="c l" style="left:471px;width:173px"><span class="t n">10.02.1991</span><span class="t tm">12:00 am</span></div><div class="c l" style="left:643px;width:86px"><span class="t n">180</span></div><div class="c l" style="left:728px;width:94px"><span class="t">PRel</span></div><div class="c r" style="left:821px;width:106px"><span class="t n">4</span></div><div class="c l" style="left:926px;width:142px"><span class="t">USA</span></div><div class="c r" style="left:1067px;width:91px"><span class="t n">42.742,50</span></div><div class="c l last" style="left:1157px;width:141px"><span class="t">Nordstrom, Carol</span></div></div>
<div class="row g" style="top:725px;height:26px"><div class="ind"></div><div class="c r" style="left:18px;width:92px"><span class="t n">61</span></div><div class="c l" style="left:109px;width:133px"><span class="t">Luke</span></div><div class="c l" style="left:241px;width:124px"><span class="t">Leung</span></div><div class="c l" style="left:364px;width:108px"><span class="t n">3</span></div><div class="c l" style="left:471px;width:173px"><span class="t n">02.18.1992</span><span class="t tm">12:00 am</span></div><div class="c l" style="left:643px;width:86px"><span class="t n">110</span></div><div class="c l" style="left:728px;width:94px"><span class="t">SRep</span></div><div class="c r" style="left:821px;width:106px"><span class="t n">4</span></div><div class="c l" style="left:926px;width:142px"><span class="t">USA</span></div><div class="c r" style="left:1067px;width:91px"><span class="t n">68.805,00</span></div><div class="c l last" style="left:1157px;width:141px"><span class="t">Leung, Luke</span></div></div>
<div class="row" style="top:751px;height:25px"><div class="ind"></div><div class="c r" style="left:18px;width:92px"><span class="t n">65</span></div><div class="c l" style="left:109px;width:133px"><span class="t">Sue Anne</span></div><div class="c l" style="left:241px;width:124px"><span class="t">O&#39;Brien</span></div><div class="c l" style="left:364px;width:108px"><span class="t n">877</span></div><div class="c l" style="left:471px;width:173px"><span class="t n">03.23.1992</span><span class="t tm">12:00 am</span></div><div class="c l" style="left:643px;width:86px"><span class="t n">670</span></div><div class="c l" style="left:728px;width:94px"><span class="t">Admin</span></div><div class="c r" style="left:821px;width:106px"><span class="t n">5</span></div><div class="c l" style="left:926px;width:142px"><span class="t">USA</span></div><div class="c r" style="left:1067px;width:91px"><span class="t n">31.275,00</span></div><div class="c l last" style="left:1157px;width:141px"><span class="t">O&#39;Brien, Sue Anne</span></div></div>
</div>
<div id="vs">
<div class="sbtn" style="left:0;top:0;width:24px;height:24px"><i class="sarr up" style="left:5px;top:8px"></i></div>
<div class="sbtn" style="left:0;top:90px;width:24px;height:202px"></div>
<div class="sbtn" style="left:0;top:603px;width:24px;height:24px"><i class="sarr" style="left:5px;top:9px"></i></div>
</div>
<div id="hs">
<div class="sbtn" style="left:0;top:0;width:24px;height:24px"><i class="sarr lf" style="left:7px;top:6px"></i></div>
<div class="sbtn" style="left:24px;top:0;width:1228px;height:24px"></div>
<div class="sbtn" style="left:1274px;top:0;width:24px;height:24px"><i class="sarr rt" style="left:9px;top:6px"></i></div>
</div>
<div id="gcorner"></div><div id="gwr"></div><div id="gwb"></div><div id="gwl"></div><div id="gwt"></div>
<div id="redbox"></div>
<div id="bot">
<div class="gv"><span class="lbl" style="left:10px;top:5px"><span class="t"><u>G</u>rid View</span></span></div>
<div class="sep" style="left:92px"></div>
<span class="lbl" style="left:110px;top:16px"><span class="t"><u>F</u>orm View</span></span>
<div class="sep" style="left:199px"></div>
<span class="lbl" style="left:217px;top:16px"><span class="t"><u>P</u>rint Data</span></span>
<div class="sep" style="left:303px"></div>
</div>
<div id="frT"></div><div id="frL"></div><div id="frR"></div><div id="frB"></div>
</div>
</body></html>
